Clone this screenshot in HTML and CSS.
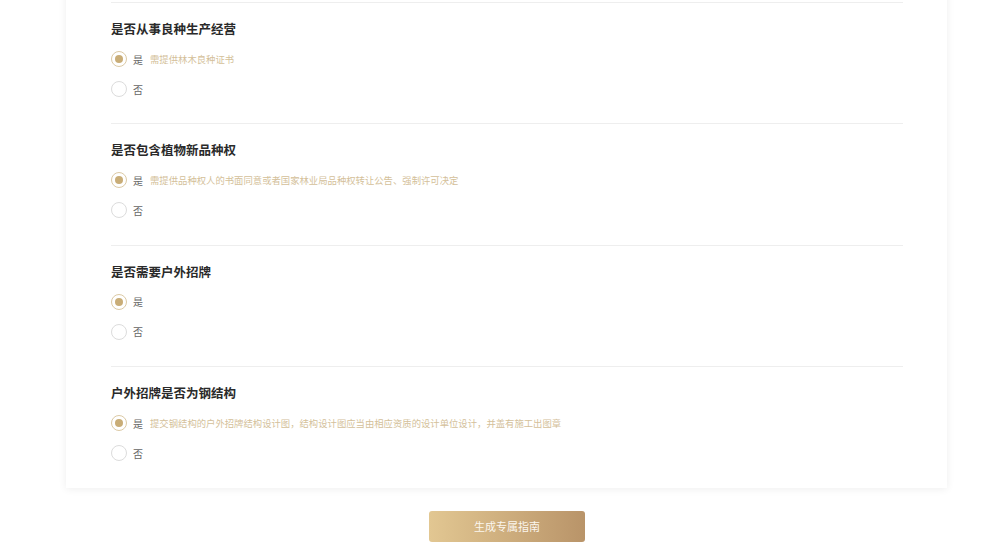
FILE: index.html
```html
<html>
<head>
	<meta charset="utf-8">
	<title>专属指南</title>
	<link rel="stylesheet" href="styles.css">
</head>
<body>
	<div class="card">
		<div class="item">
			<div class="title">是否从事良种生产经营</div>
			<div class="opt"><span class="radio on"></span><span class="lab">是</span><span class="tip">需提供林木良种证书</span></div>
			<div class="opt"><span class="radio"></span><span class="lab">否</span></div>
		</div>
		<div class="item">
			<div class="title">是否包含植物新品种权</div>
			<div class="opt"><span class="radio on"></span><span class="lab">是</span><span class="tip">需提供品种权人的书面同意或者国家林业局品种权转让公告、强制许可决定</span></div>
			<div class="opt"><span class="radio"></span><span class="lab">否</span></div>
		</div>
		<div class="item">
			<div class="title">是否需要户外招牌</div>
			<div class="opt"><span class="radio on"></span><span class="lab">是</span></div>
			<div class="opt"><span class="radio"></span><span class="lab">否</span></div>
		</div>
		<div class="item">
			<div class="title">户外招牌是否为钢结构</div>
			<div class="opt"><span class="radio on"></span><span class="lab">是</span><span class="tip">提交钢结构的户外招牌结构设计图，结构设计图应当由相应资质的设计单位设计，并盖有施工出图章</span></div>
			<div class="opt"><span class="radio"></span><span class="lab">否</span></div>
		</div>
	</div>

	<div class="bar">
		<button class="btn">生成专属指南</button>
	</div>
</body>
</html>
```

FILE: styles.css
```css
body{
	margin:0;
	background:#fff;
	font-family:"Noto Sans CJK SC","Noto Sans",sans-serif;
}
.card{
	width:881px;
	margin:-20px 0 0 66px;
	padding:22px 44px 0 45px;
	box-sizing:border-box;
	background:#fff;
	box-shadow:0 1px 8px rgba(0,0,0,0.07);
}
.item{
	border-top:1px solid #eeeeee;
	padding:16px 0 24.4px 0;
}
.title{
	font-size:12.5px;
	line-height:20px;
	font-weight:bold;
	color:#2a2a2a;
	margin-bottom:10px;
}
.opt{
	display:flex;
	align-items:center;
	height:20px;
	margin-bottom:10px;
}
.opt:last-child{
	margin-bottom:0;
}
.radio{
	width:14px;
	height:14px;
	border:1px solid #dcdcdc;
	border-radius:50%;
	box-sizing:content-box;
	display:flex;
	align-items:center;
	justify-content:center;
	flex-shrink:0;
}
.radio.on{
	border-color:#dccaa5;
}
.radio.on::after{
	content:"";
	width:8px;
	height:8px;
	border-radius:50%;
	background:#c9ad77;
}
.lab{
	font-size:10px;
	color:#666;
	margin-left:6px;
}
.tip{
	font-size:9.35px;
	color:#d4bf9a;
	margin-left:7px;
}
.bar{
	display:flex;
	justify-content:center;
	padding:23px 0 0 14px;
}
.btn{
	width:156px;
	height:31px;
	border:none;
	border-radius:3px;
	background:linear-gradient(90deg,#e2c792,#b99469);
	color:#fbf6ee;
	font-family:"Noto Sans CJK SC",sans-serif;
	font-size:11px;
}
```
